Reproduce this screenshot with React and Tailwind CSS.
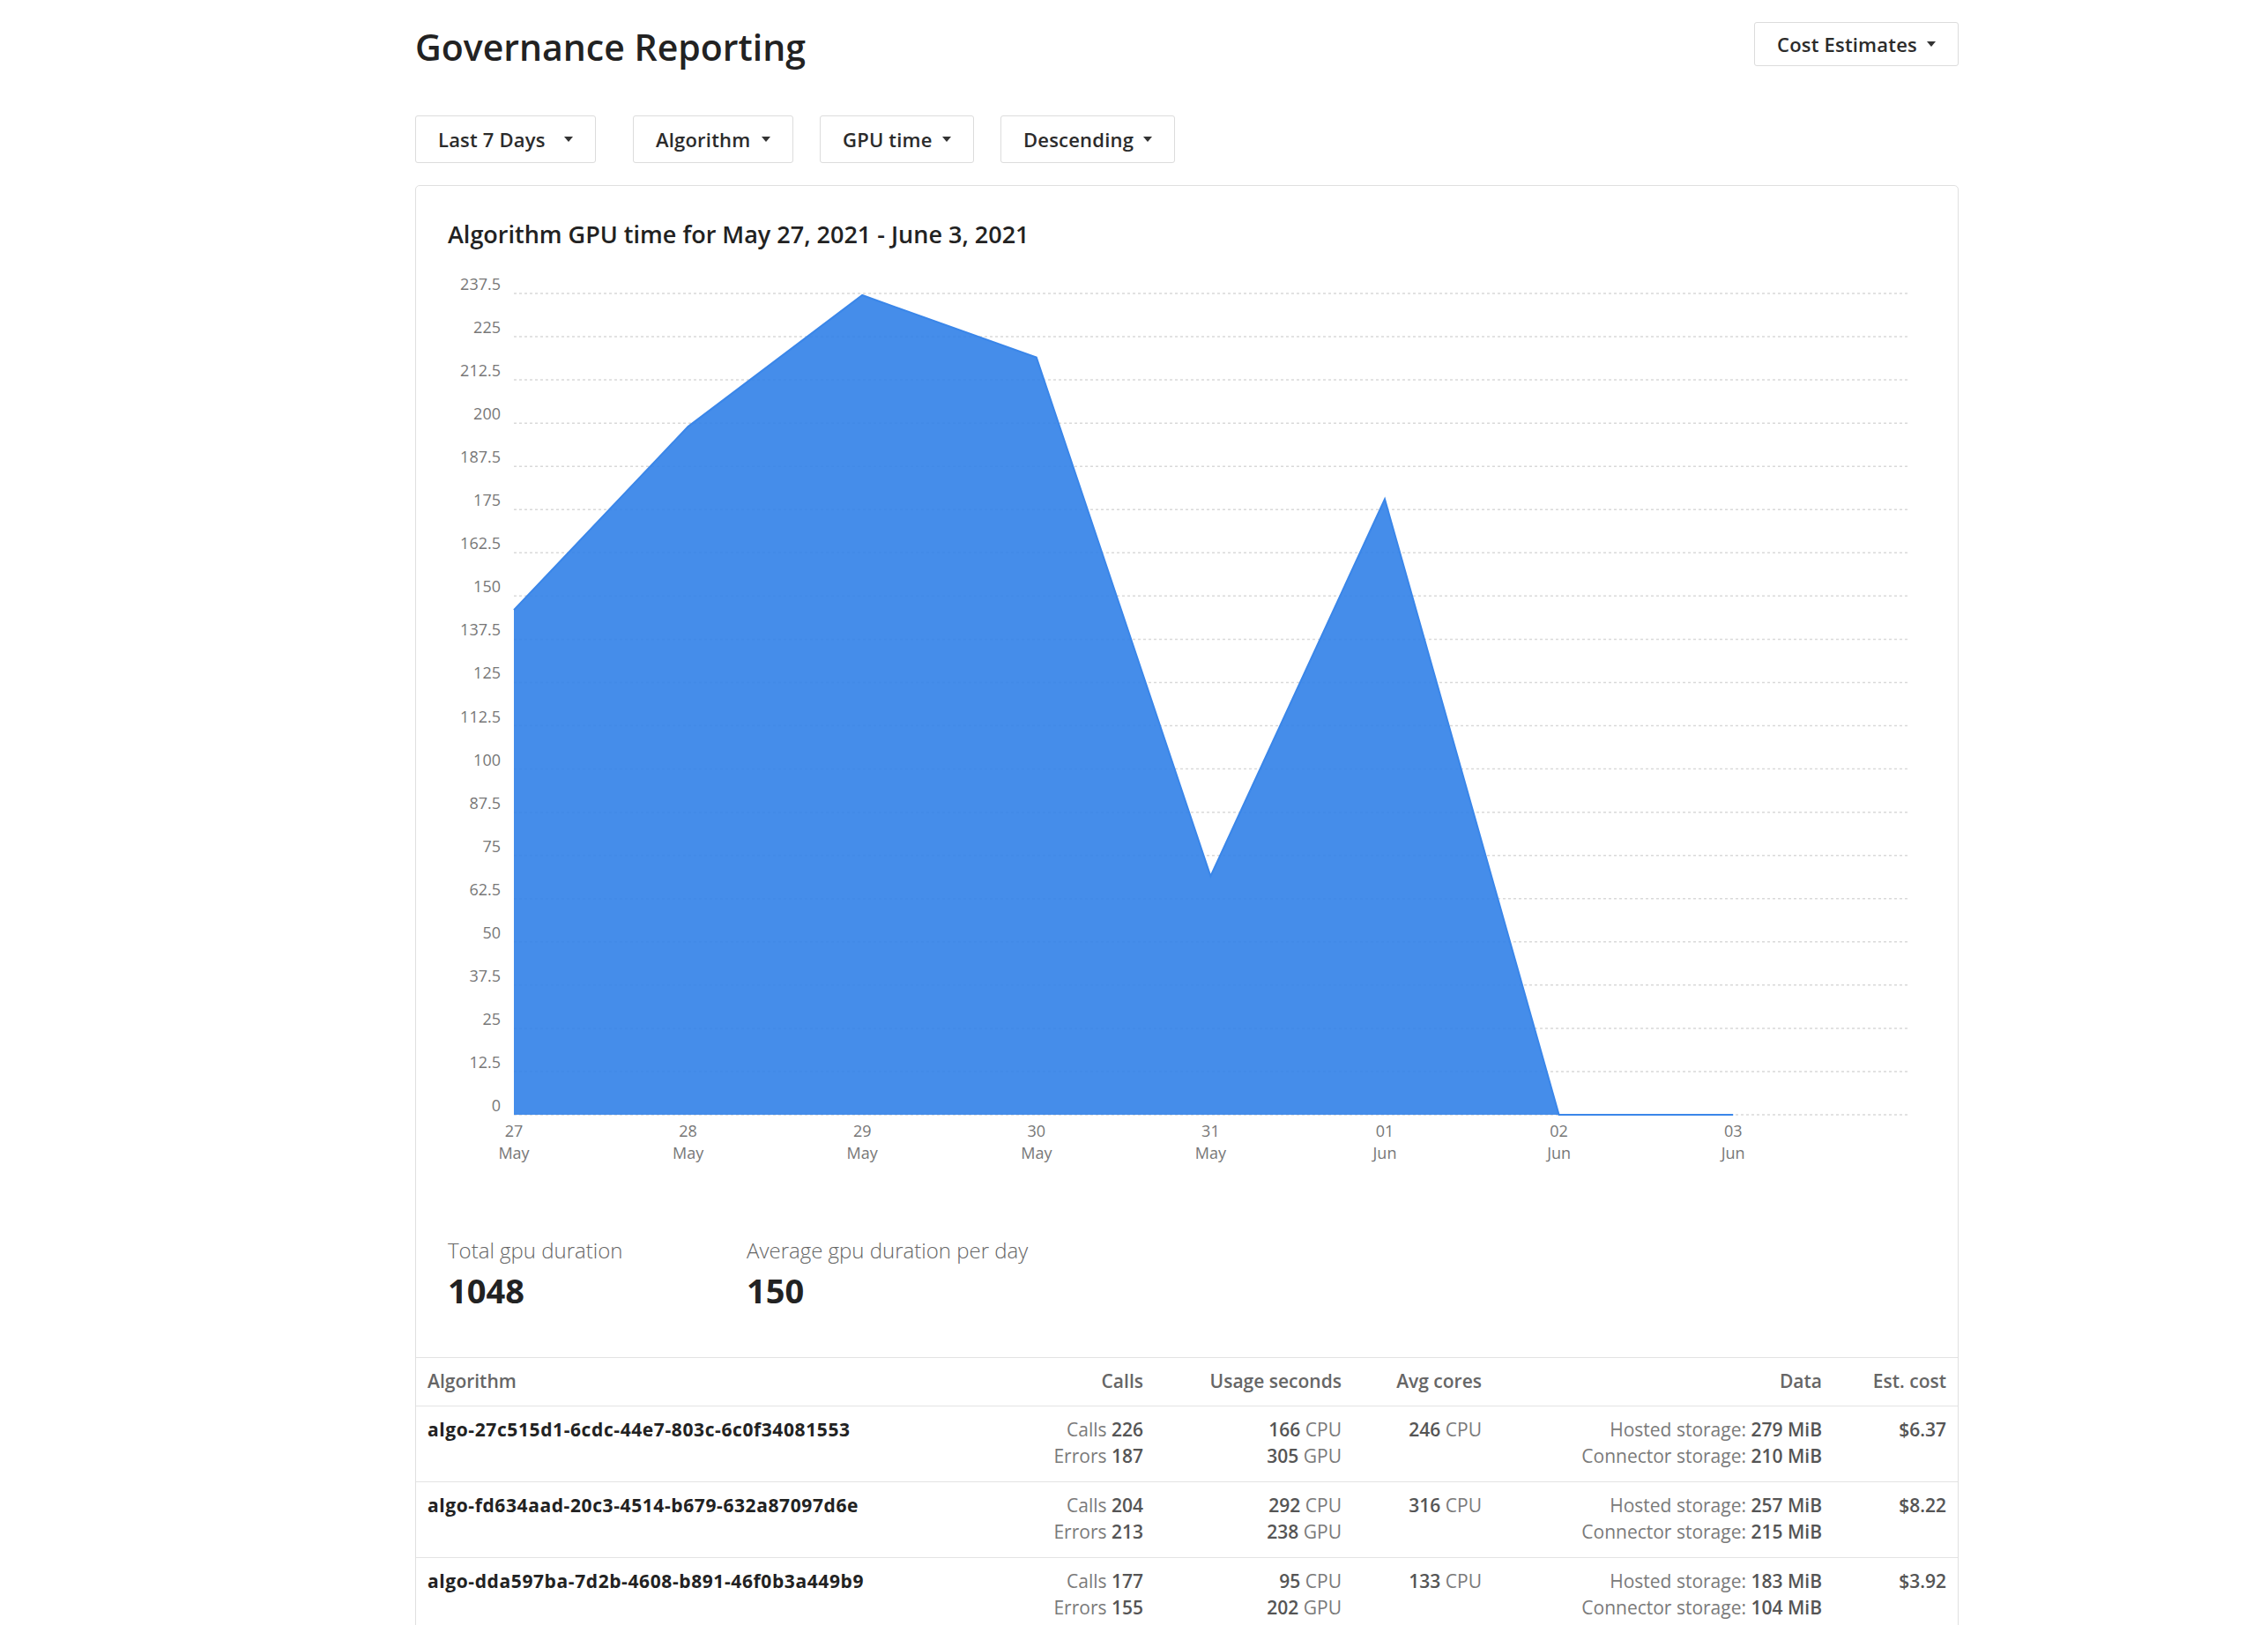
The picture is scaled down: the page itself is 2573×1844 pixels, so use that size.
import React from "react";

const font = { fontFamily: "'Open Sans', Lato, sans-serif" };

function Caret() {
  return (
    <svg width="10" height="6" viewBox="0 0 10 6" className="shrink-0">
      <path d="M0 0 L10 0 L5 6 Z" fill="#333" />
    </svg>
  );
}

function DropButton({ label, className = "" }) {
  return (
    <button
      className={
        "flex items-center justify-between whitespace-nowrap rounded-[3px] border border-[#dcdcdc] bg-white px-[25px] text-[22px] font-semibold tracking-[0.2px] text-[#2b2b2b] " +
        className
      }
    >
      <span>{label}</span>
      <Caret />
    </button>
  );
}

const values = [146, 199, 237, 219, 69, 178, 0, 0];
const days = [
  ["27", "May"],
  ["28", "May"],
  ["29", "May"],
  ["30", "May"],
  ["31", "May"],
  ["01", "Jun"],
  ["02", "Jun"],
  ["03", "Jun"],
];

function Chart() {
  const x0 = 111;
  const step = 197.6;
  const yBase = 965;
  const h = 932;
  const X = (i) => x0 + i * step;
  const Y = (v) => yBase - (v / 237.5) * h;
  const ticks = [];
  for (let i = 0; i <= 19; i++) ticks.push(i * 12.5);
  const pts = values.map((v, i) => `${X(i)},${Y(v)}`).join(" L");
  const area = `M${X(0)},${yBase} L${pts} L${X(7)},${yBase} Z`;
  const line = `M${pts}`;
  return (
    <svg width="1749" height="1030" className="block" style={font}>
      {ticks.map((t) => (
        <line
          key={"g" + t}
          x1={x0}
          x2={1692}
          y1={Y(t)}
          y2={Y(t)}
          stroke="#d9d9d9"
          strokeWidth="1.5"
          strokeDasharray="3 3"
        />
      ))}
      <path d={area} fill="#3181e8" fillOpacity="0.9" />
      <path d={line} fill="none" stroke="#3a86e9" strokeWidth="2" />
      {ticks.map((t) => (
        <text
          key={"t" + t}
          x={96}
          y={Y(t) - 4}
          textAnchor="end"
          fontSize="18"
          fill="#777"
        >
          {t}
        </text>
      ))}
      {days.map(([d, m], i) => (
        <g key={d + m}>
          <text x={X(i)} y={990} textAnchor="middle" fontSize="18" fill="#777">
            {d}
          </text>
          <text x={X(i)} y={1015} textAnchor="middle" fontSize="18" fill="#777">
            {m}
          </text>
        </g>
      ))}
    </svg>
  );
}

const rows = [
  {
    name: "algo-27c515d1-6cdc-44e7-803c-6c0f34081553",
    calls: 226,
    errors: 187,
    cpu: 166,
    gpu: 305,
    cores: 246,
    hosted: 279,
    connector: 210,
    cost: "$6.37",
  },
  {
    name: "algo-fd634aad-20c3-4514-b679-632a87097d6e",
    calls: 204,
    errors: 213,
    cpu: 292,
    gpu: 238,
    cores: 316,
    hosted: 257,
    connector: 215,
    cost: "$8.22",
  },
  {
    name: "algo-dda597ba-7d2b-4608-b891-46f0b3a449b9",
    calls: 177,
    errors: 155,
    cpu: 95,
    gpu: 202,
    cores: 133,
    hosted: 183,
    connector: 104,
    cost: "$3.92",
  },
];

const cols = "grid grid-cols-[677px_161px_225px_159px_386px_141px]";

function Light({ children }) {
  return <span className="font-normal text-[#7a7a7a]">{children}</span>;
}
function Strong({ children }) {
  return <span className="font-semibold text-[#555]">{children}</span>;
}

export default function App() {
  return (
    <div className="min-h-screen bg-white" style={font}>
      <div className="ml-[471px] w-[1751px]">
        <div className="flex items-start justify-between">
          <h1 className="mt-[28px] text-[41px] font-semibold leading-[50px] text-[#222]">
            Governance Reporting
          </h1>
          <DropButton label="Cost Estimates" className="mt-[25px] h-[50px] w-[232px]" />
        </div>

        <div className="mt-[53px] flex items-center">
          <DropButton label="Last 7 Days" className="h-[54px] w-[205px]" />
          <div className="ml-[42px] flex gap-[30px]">
            <DropButton label="Algorithm" className="h-[54px] w-[182px]" />
            <DropButton label="GPU time" className="h-[54px] w-[175px]" />
            <DropButton label="Descending" className="h-[54px] w-[198px]" />
          </div>
        </div>

        <div className="mt-[25px] overflow-hidden rounded-t-[5px] border border-[#e0e0e0] bg-white">
          <h2 className="pl-[36px] pt-[39px] text-[27px] font-semibold leading-[32px] text-[#222]">
            Algorithm GPU time for May 27, 2021 - June 3, 2021
          </h2>
          <div className="mt-[18px]">
            <Chart />
          </div>

          <div className="mt-[74px] flex pl-[36px]">
            <div className="w-[339px]">
              <div className="text-[24px] font-light leading-[30px] text-[#666]">
                Total gpu duration
              </div>
              <div className="mt-[8px] text-[38px] font-bold leading-[44px] text-[#222]">
                1048
              </div>
            </div>
            <div>
              <div className="text-[24px] font-light leading-[30px] text-[#666]">
                Average gpu duration per day
              </div>
              <div className="mt-[8px] text-[38px] font-bold leading-[44px] text-[#222]">
                150
              </div>
            </div>
          </div>

          <div className="mt-[54px] border-t border-[#e3e3e3]">
            <div
              className={
                cols +
                " h-[55px] items-center border-b border-[#e3e3e3] text-[21px] font-semibold text-[#666]"
              }
            >
              <div className="px-[13px]">Algorithm</div>
              <div className="px-[13px] text-right">Calls</div>
              <div className="px-[13px] text-right">Usage seconds</div>
              <div className="px-[13px] text-right">Avg cores</div>
              <div className="px-[13px] text-right">Data</div>
              <div className="px-[13px] text-right">Est. cost</div>
            </div>
            {rows.map((r) => (
              <div
                key={r.name}
                className={
                  cols +
                  " border-b border-[#e3e3e3] pb-[14px] pt-[11px] text-[21px] leading-[30px]"
                }
              >
                <div className="whitespace-nowrap px-[13px] font-bold tracking-[0.6px] text-[#222]">
                  {r.name}
                </div>
                <div className="whitespace-nowrap px-[13px] text-right">
                  <div>
                    <Light>Calls</Light> <Strong>{r.calls}</Strong>
                  </div>
                  <div>
                    <Light>Errors</Light> <Strong>{r.errors}</Strong>
                  </div>
                </div>
                <div className="whitespace-nowrap px-[13px] text-right">
                  <div>
                    <Strong>{r.cpu}</Strong> <Light>CPU</Light>
                  </div>
                  <div>
                    <Strong>{r.gpu}</Strong> <Light>GPU</Light>
                  </div>
                </div>
                <div className="whitespace-nowrap px-[13px] text-right">
                  <Strong>{r.cores}</Strong> <Light>CPU</Light>
                </div>
                <div className="whitespace-nowrap px-[13px] text-right">
                  <div>
                    <Light>Hosted storage:</Light> <Strong>{r.hosted} MiB</Strong>
                  </div>
                  <div>
                    <Light>Connector storage:</Light> <Strong>{r.connector} MiB</Strong>
                  </div>
                </div>
                <div className="px-[13px] text-right">
                  <Strong>{r.cost}</Strong>
                </div>
              </div>
            ))}
          </div>
        </div>
      </div>
    </div>
  );
}
